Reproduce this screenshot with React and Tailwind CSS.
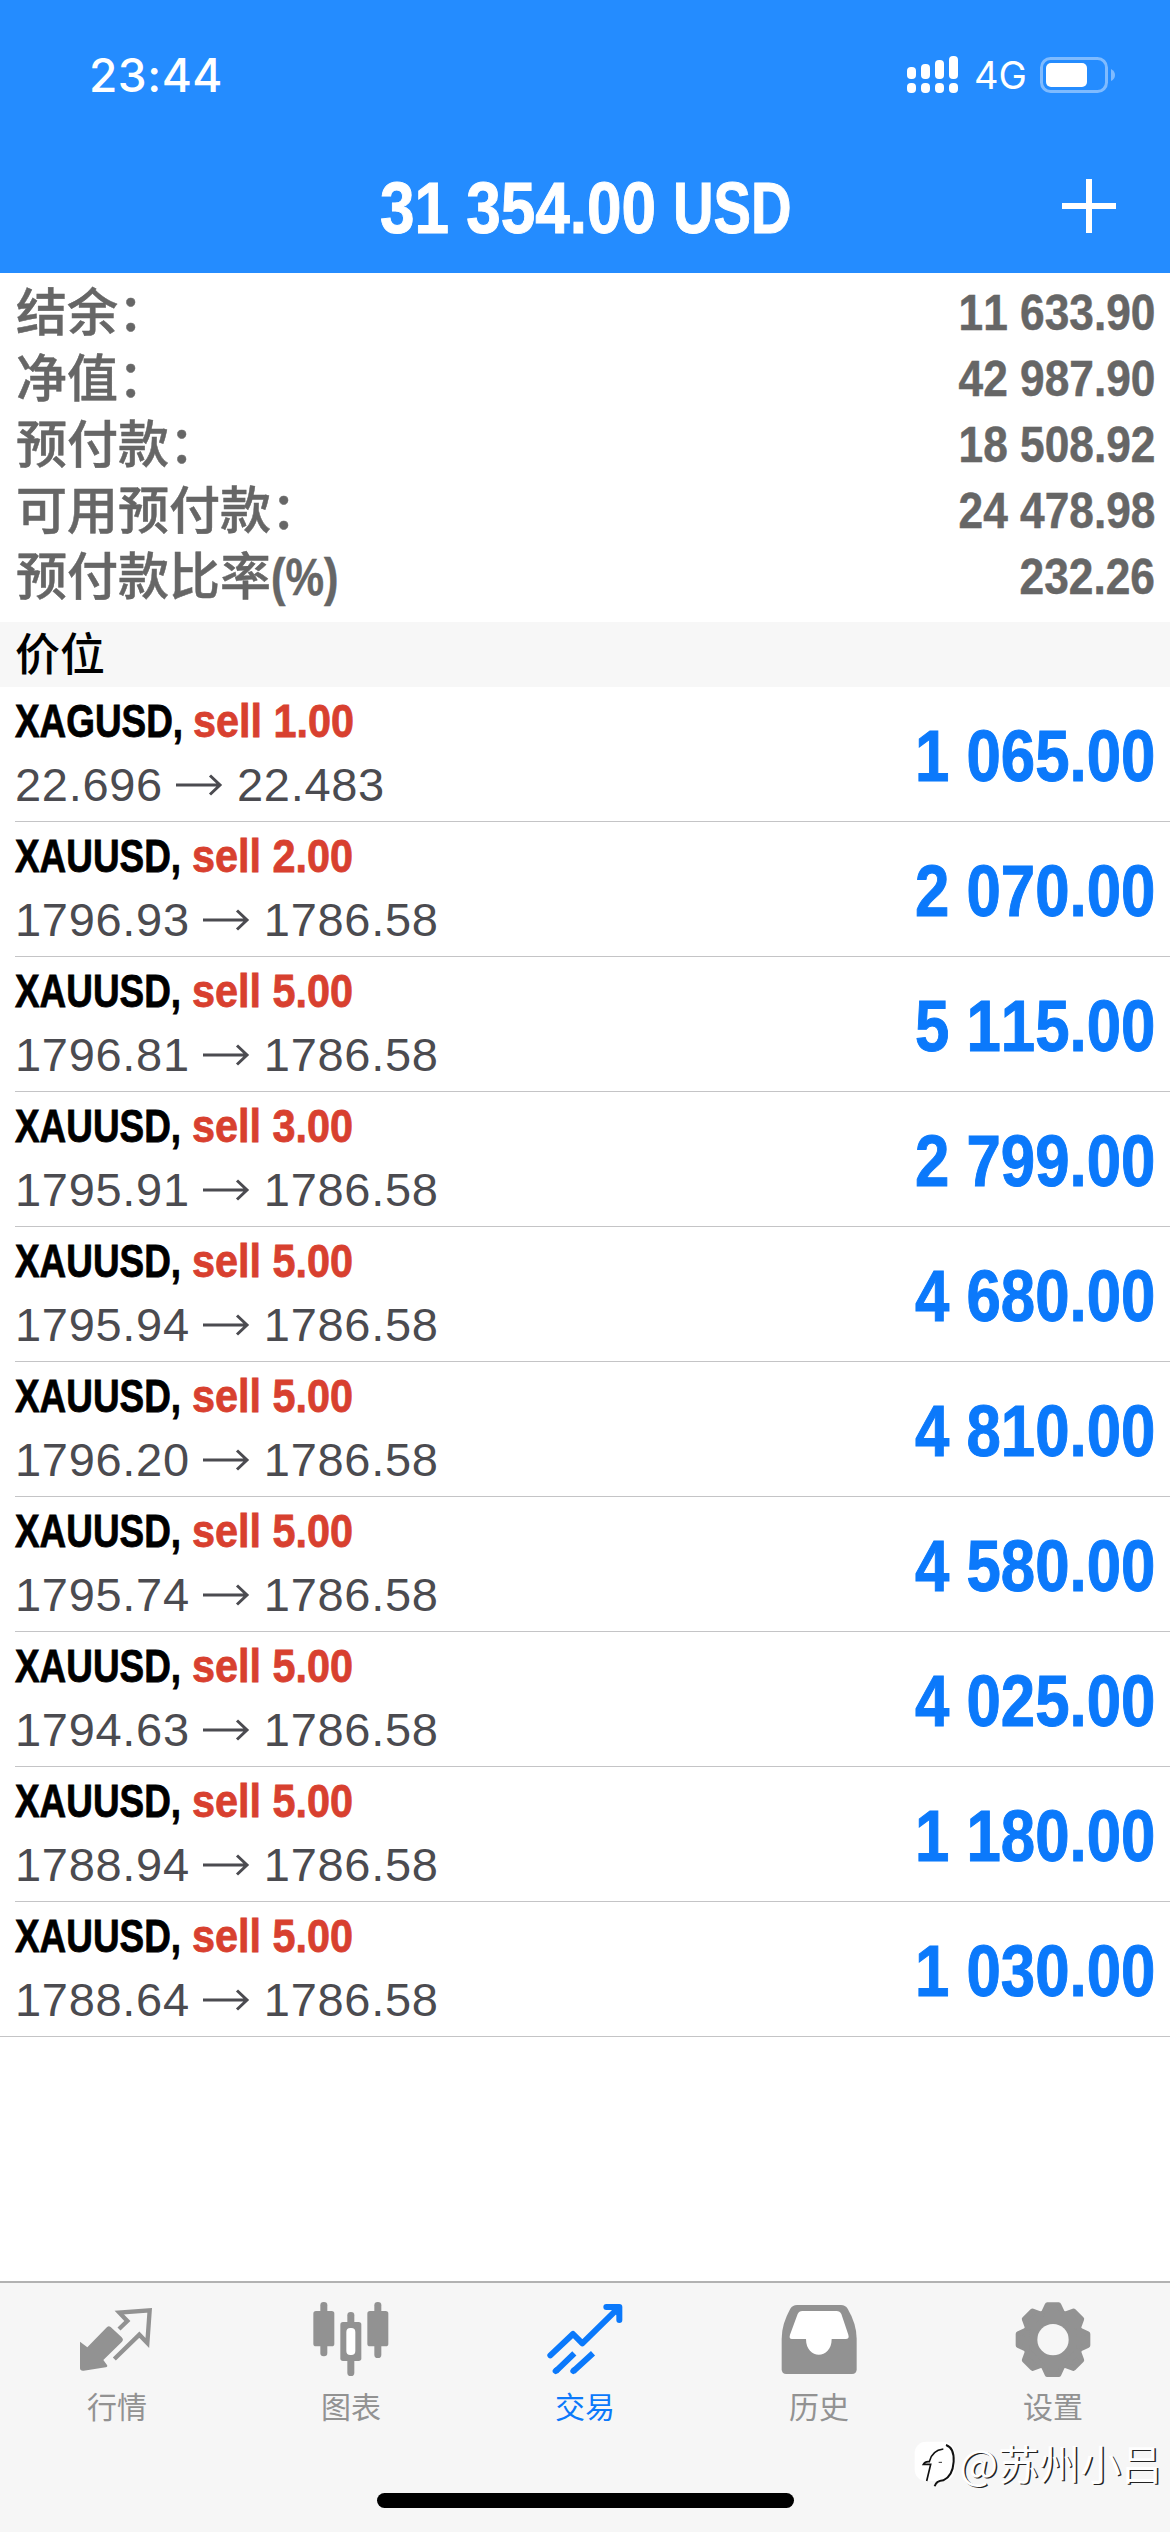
import React from 'react';

const summary = [
    { label: '结余：', value: '11 633.90' },
    { label: '净值：', value: '42 987.90' },
    { label: '预付款：', value: '18 508.92' },
    { label: '可用预付款：', value: '24 478.98' },
    { label: '预付款比率', unit: '(%)', value: '232.26' },
];

const positions = [
    { symbol: 'XAGUSD', volume: '1.00', open: '22.696', current: '22.483', profit: '1 065.00' },
    { symbol: 'XAUUSD', volume: '2.00', open: '1796.93', current: '1786.58', profit: '2 070.00' },
    { symbol: 'XAUUSD', volume: '5.00', open: '1796.81', current: '1786.58', profit: '5 115.00' },
    { symbol: 'XAUUSD', volume: '3.00', open: '1795.91', current: '1786.58', profit: '2 799.00' },
    { symbol: 'XAUUSD', volume: '5.00', open: '1795.94', current: '1786.58', profit: '4 680.00' },
    { symbol: 'XAUUSD', volume: '5.00', open: '1796.20', current: '1786.58', profit: '4 810.00' },
    { symbol: 'XAUUSD', volume: '5.00', open: '1795.74', current: '1786.58', profit: '4 580.00' },
    { symbol: 'XAUUSD', volume: '5.00', open: '1794.63', current: '1786.58', profit: '4 025.00' },
    { symbol: 'XAUUSD', volume: '5.00', open: '1788.94', current: '1786.58', profit: '1 180.00' },
    { symbol: 'XAUUSD', volume: '5.00', open: '1788.64', current: '1786.58', profit: '1 030.00' },
];

const QuotesIcon = () => (
    <svg width="76" height="80" viewBox="0 0 228 240">
        <path d="M3 122 L25 139 L82 80 Q88 72 95 78 L128 109 Q135 116 129 122 L73 177 L84 192 Q87 197 80 199 L14 209 Q3 210 3 202Z" fill="currentColor" />
        <path d="M120 84 L145 60 L121 35 L212 28 L205 126 L181 101 L106 174" fill="none" stroke="currentColor" strokeWidth="13" />
    </svg>
);

const ChartIcon = () => (
    <svg width="76" height="80" viewBox="0 0 228 240" fill="currentColor">
        <rect x="22" y="3" width="21" height="163" rx="10" />
        <rect x="1" y="30" width="63" height="106" rx="8" />
        <rect x="184" y="3" width="21" height="168" rx="10" />
        <rect x="163" y="30" width="63" height="106" rx="8" />
        <rect x="103" y="33" width="21" height="40" rx="10" />
        <rect x="103" y="167" width="21" height="58" rx="10" />
        <rect x="82" y="63" width="63" height="117" rx="8" />
        <rect x="100" y="81" width="27" height="81" rx="12" fill="#fff" />
    </svg>
);

const TradeIcon = () => (
    <svg width="76" height="80" viewBox="0 0 228 240" fill="none" stroke="currentColor" strokeWidth="18" strokeLinecap="round" strokeLinejoin="round">
        <path d="M10 163 L78 99 L106 127 L206 29" />
        <path d="M178 18 H217 V57" />
        <path d="M26 211 L82 157 M79 211 L138 157" strokeLinecap="butt" />
        <path d="M26 210 L28 208 M79 210 L81 208" />
        <path d="M200 21 L214 35" />
    </svg>
);

const HistoryIcon = () => (
    <svg width="76" height="80" viewBox="0 0 228 240">
        <path fill="currentColor" d="M48 12H180Q193 12 200 23Q227 69 227 113V205Q227 219 213 219H16Q2 219 2 205V113Q2 69 28 23Q35 12 48 12Z" />
        <path fill="#fff" d="M64 30Q54 30 50 39L27 101Q23 114 33 114H75C75 177 152 177 152 114H194Q206 114 202 101L181 39Q177 30 166 30Z" />
    </svg>
);

const SettingsIcon = () => (
    <svg width="76" height="80" viewBox="0 0 228 240">
        <g fill="currentColor" stroke="currentColor" strokeLinejoin="round" strokeWidth="16">
            <circle cx="114" cy="116" r="84" />
            {[0, 45, 90, 135, 180, 225, 270, 315].map((angle) => (
                <path key={angle} d="M97 12H131L143 38H85Z" transform={`rotate(${angle} 114 116)`} />
            ))}
        </g>
        <circle cx="114" cy="116" r="47" fill="#f6f6f6" />
    </svg>
);

const tabs = [
    { label: '行情', Icon: QuotesIcon },
    { label: '图表', Icon: ChartIcon },
    { label: '交易', Icon: TradeIcon, active: true },
    { label: '历史', Icon: HistoryIcon },
    { label: '设置', Icon: SettingsIcon },
];

const Header = () => (
    <header className="h-[273px] bg-[#248cff] text-white">
        <div className="flex h-[150px] items-center justify-between pr-[53px] pl-[89px]">
            <span className="font-['Inter',sans-serif] text-[46px] leading-none font-medium tracking-[0.5px]">23:44</span>
            <div className="flex items-center">
                <svg width="52" height="38" viewBox="0 0 52 38" fill="currentColor">
                    <rect x="0" y="11" width="9" height="12" rx="4" />
                    <rect x="14" y="8" width="9" height="15" rx="4" />
                    <rect x="28" y="4" width="9" height="19" rx="4" />
                    <rect x="42" y="0" width="9" height="23" rx="4" />
                    <rect x="0" y="27" width="9" height="10" rx="4" />
                    <rect x="14" y="27" width="9" height="10" rx="4" />
                    <rect x="28" y="27" width="9" height="10" rx="4" />
                    <rect x="42" y="27" width="9" height="10" rx="4" />
                </svg>
                <span className="ml-[15px] w-[66px] font-['Inter',sans-serif] text-[38px] leading-none">4G</span>
                <svg width="77" height="38" viewBox="0 0 77 38">
                    <rect x="1.5" y="2.5" width="65" height="33" rx="9" fill="none" stroke="#7fbbff" strokeWidth="3" />
                    <rect x="6" y="7" width="41" height="24" rx="5" fill="#fff" />
                    <path d="M71 13Q75 15 75 19T71 25Z" fill="#7fbbff" />
                </svg>
            </div>
        </div>
        <div className="grid h-[112px] grid-cols-[1fr_410px_1fr] items-center font-['Liberation_Sans',Arial,sans-serif]">
            <h1 className="col-start-2 flex pt-[3px] text-[72px] leading-none font-bold whitespace-nowrap [-webkit-text-stroke:1px]">
                <span className="w-[293px]">
                    <span className="inline-block origin-left scale-x-[0.862]">31 354.00</span>
                </span>
                <span className="w-[117px]">
                    <span className="inline-block origin-left scale-x-[0.78]">USD</span>
                </span>
            </h1>
            <svg className="mr-[54px] justify-self-end" width="54" height="54" viewBox="0 0 54 54" stroke="currentColor" strokeWidth="6">
                <path d="M27 0V54M0 27H54" />
            </svg>
        </div>
    </header>
);

const PositionRow = ({ position, last }) => (
    <li className={last ? 'h-[135px] border-b border-[#c4c4c6]' : 'ml-[15px] h-[135px] border-b border-[#c4c4c6]'}>
        <div className={last ? 'flex h-full items-center justify-between pr-[15px] pb-px pl-[15px]' : 'flex h-full items-center justify-between pr-[15px] pb-px'}>
            <div>
                <div className="flex h-[62px] items-center pb-[4px] text-[47px] leading-none font-bold whitespace-nowrap [-webkit-text-stroke:0.8px]">
                    <span className={position.symbol === 'XAGUSD' ? 'w-[178px] text-black' : 'w-[177px] text-black'}>
                        <span className="inline-block origin-left scale-x-[0.785]">{position.symbol},</span>
                    </span>
                    <span className="inline-block origin-left scale-x-[0.88] text-[#d8402f]">sell {position.volume}</span>
                </div>
                <div className="flex h-[62px] items-center text-[47px] leading-none tracking-[0.7px] text-[#4b4b50]">
                    <span>{position.open}</span>
                    <svg className="mr-[14px] ml-[13px]" width="47" height="22" viewBox="0 0 47 22" fill="none" stroke="currentColor" strokeWidth="3">
                        <path d="M0 11H44M34 1.500L44 11L34 20.500" />
                    </svg>
                    <span>{position.current}</span>
                </div>
            </div>
            <span className="inline-block origin-right scale-x-[0.857] pt-[5px] text-[72px] leading-none font-bold whitespace-nowrap text-[#0b79fb] [-webkit-text-stroke:1px]">
                {position.profit}
            </span>
        </div>
    </li>
);

const App = () => {
    return (
        <div className="flex h-[2532px] w-[1170px] flex-col overflow-hidden bg-white font-['Liberation_Sans','Noto_Sans_CJK_SC',sans-serif] [font-kerning:none]">
            <Header />

            <dl className="h-[349px] pt-[6px] pr-[15px] pl-4 text-[#666]">
                {summary.map((item) => (
                    <div key={item.label} className="flex h-[66px] items-center justify-between">
                        <dt className="flex pt-[2px] text-[51px] leading-none font-medium [-webkit-text-stroke:0.5px]">
                            {item.label}
                            {item.unit && <span className="origin-left scale-x-[0.85] font-bold">{item.unit}</span>}
                        </dt>
                        <dd className="origin-right scale-x-[0.885] pt-[2px] text-[50px] leading-none font-bold [-webkit-text-stroke:0.5px]">{item.value}</dd>
                    </div>
                ))}
            </dl>

            <h2 className="flex h-[65px] items-center bg-[#f7f7f7] pt-[2px] pl-[15px] text-[45px] leading-none font-medium text-black">
                价位
            </h2>

            <ul>
                {positions.map((position, i) => (
                    <PositionRow key={i} position={position} last={i === positions.length - 1} />
                ))}
            </ul>

            <footer className="relative mt-auto flex h-[251px] flex-col items-center border-t-2 border-[#b2b2b2] bg-[#f6f6f6]">
                <nav className="grid w-full grid-cols-5 pt-[18px]">
                    {tabs.map(({ label, Icon, active }) => (
                        <div key={label} className={active ? 'flex flex-col items-center text-[#0b79fb]' : 'flex flex-col items-center text-[#929292]'}>
                            <Icon />
                            <span className="mt-[9px] font-['Noto_Sans_CJK_SC',sans-serif] text-[30px] leading-none">{label}</span>
                        </div>
                    ))}
                </nav>
                <div className="mt-auto mb-6 h-[15px] w-[417px] rounded-full bg-black" />

                {/* author tag over the tab bar */}
                <div className="absolute right-[8px] bottom-[41px] flex items-center">
                    <svg className="mt-[6px]" width="45" height="52" viewBox="0 0 135 156">
                        <rect x="2" y="8" width="120" height="118" rx="34" fill="#fff" />
                        <path d="M96 18Q121 26 119 68Q116 112 88 124Q66 126 62 142" fill="none" stroke="#111" strokeWidth="6" />
                        <path d="M38 126L50 76H28Q34 66 46 68Q54 34 88 30" fill="none" stroke="#111" strokeWidth="5" />
                        <path d="M74 70H84" stroke="#333" strokeWidth="3" />
                    </svg>
                    <span className="font-['Noto_Sans_CJK_SC',sans-serif] text-[41px] leading-none font-normal text-white [text-shadow:1.5px_1px_0_#222]">@苏州小吕</span>
                </div>
            </footer>
        </div>
    );
};

export default App;
